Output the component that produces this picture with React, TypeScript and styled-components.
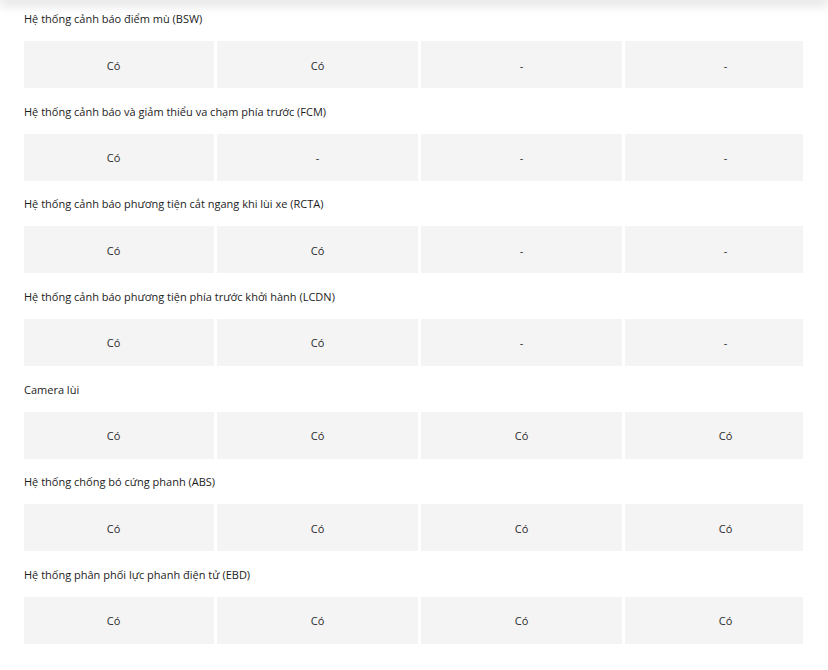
import React from 'react';
import styled, { createGlobalStyle } from 'styled-components';

const GlobalStyle = createGlobalStyle`
  html, body {
    margin: 0;
    padding: 0;
    background: #ffffff;
  }
  body {
    font-family: 'Open Sans', 'Noto Sans', Arial, sans-serif;
    color: #1f1f1f;
    overflow: hidden;
  }
`;

const Page = styled.div`
  width: 828px;
  height: 670px;
  overflow: hidden;
  position: relative;
`;

const HeaderShade = styled.div`
  height: 0;
  margin: 0 4px;
  box-shadow: 0 0 12px 5px rgba(0, 0, 0, 0.13);
`;

const SpecList = styled.div`
  display: flex;
  flex-direction: column;
  padding: 12px 25px 0 24px;
`;

const SpecBlock = styled.section`
  display: flex;
  flex-direction: column;
  height: 92.67px;
`;

const SpecTitle = styled.div`
  font-size: 11px;
  line-height: 14px;
  height: 29px;
  color: #1c1c1c;
  white-space: nowrap;
`;

const RowClip = styled.div`
  overflow: hidden;
`;

const ValueRow = styled.div`
  display: grid;
  grid-template-columns: repeat(4, 201px);
  column-gap: 3px;
  margin-left: -11px;
`;

const ValueCell = styled.div`
  height: 47px;
  padding-top: 1px;
  box-sizing: border-box;
  background: #f4f4f4;
  display: flex;
  align-items: center;
  justify-content: center;
  font-size: 11px;
  color: #2a2a2a;
`;

type Spec = {
  title: string;
  values: Array<string>;
};

const specs: Array<Spec> = [
  { title: 'Hệ thống cảnh báo điểm mù (BSW)', values: ['Có', 'Có', '-', '-'] },
  {
    title: 'Hệ thống cảnh báo và giảm thiểu va chạm phía trước (FCM)',
    values: ['Có', '-', '-', '-'],
  },
  {
    title: 'Hệ thống cảnh báo phương tiện cắt ngang khi lùi xe (RCTA)',
    values: ['Có', 'Có', '-', '-'],
  },
  {
    title: 'Hệ thống cảnh báo phương tiện phía trước khởi hành (LCDN)',
    values: ['Có', 'Có', '-', '-'],
  },
  { title: 'Camera lùi', values: ['Có', 'Có', 'Có', 'Có'] },
  { title: 'Hệ thống chống bó cứng phanh (ABS)', values: ['Có', 'Có', 'Có', 'Có'] },
  {
    title: 'Hệ thống phân phối lực phanh điện tử (EBD)',
    values: ['Có', 'Có', 'Có', 'Có'],
  },
];

const App = (): JSX.Element => (
  <Page>
    <GlobalStyle />
    <HeaderShade />
    <SpecList>
      {specs.map(({ title, values }) => (
        <SpecBlock key={title}>
          <SpecTitle>{title}</SpecTitle>
          <RowClip>
            <ValueRow>
              {values.map((value, i) => (
                <ValueCell key={`${title}-${i}`}>{value}</ValueCell>
              ))}
            </ValueRow>
          </RowClip>
        </SpecBlock>
      ))}
    </SpecList>
  </Page>
);

export default App;
